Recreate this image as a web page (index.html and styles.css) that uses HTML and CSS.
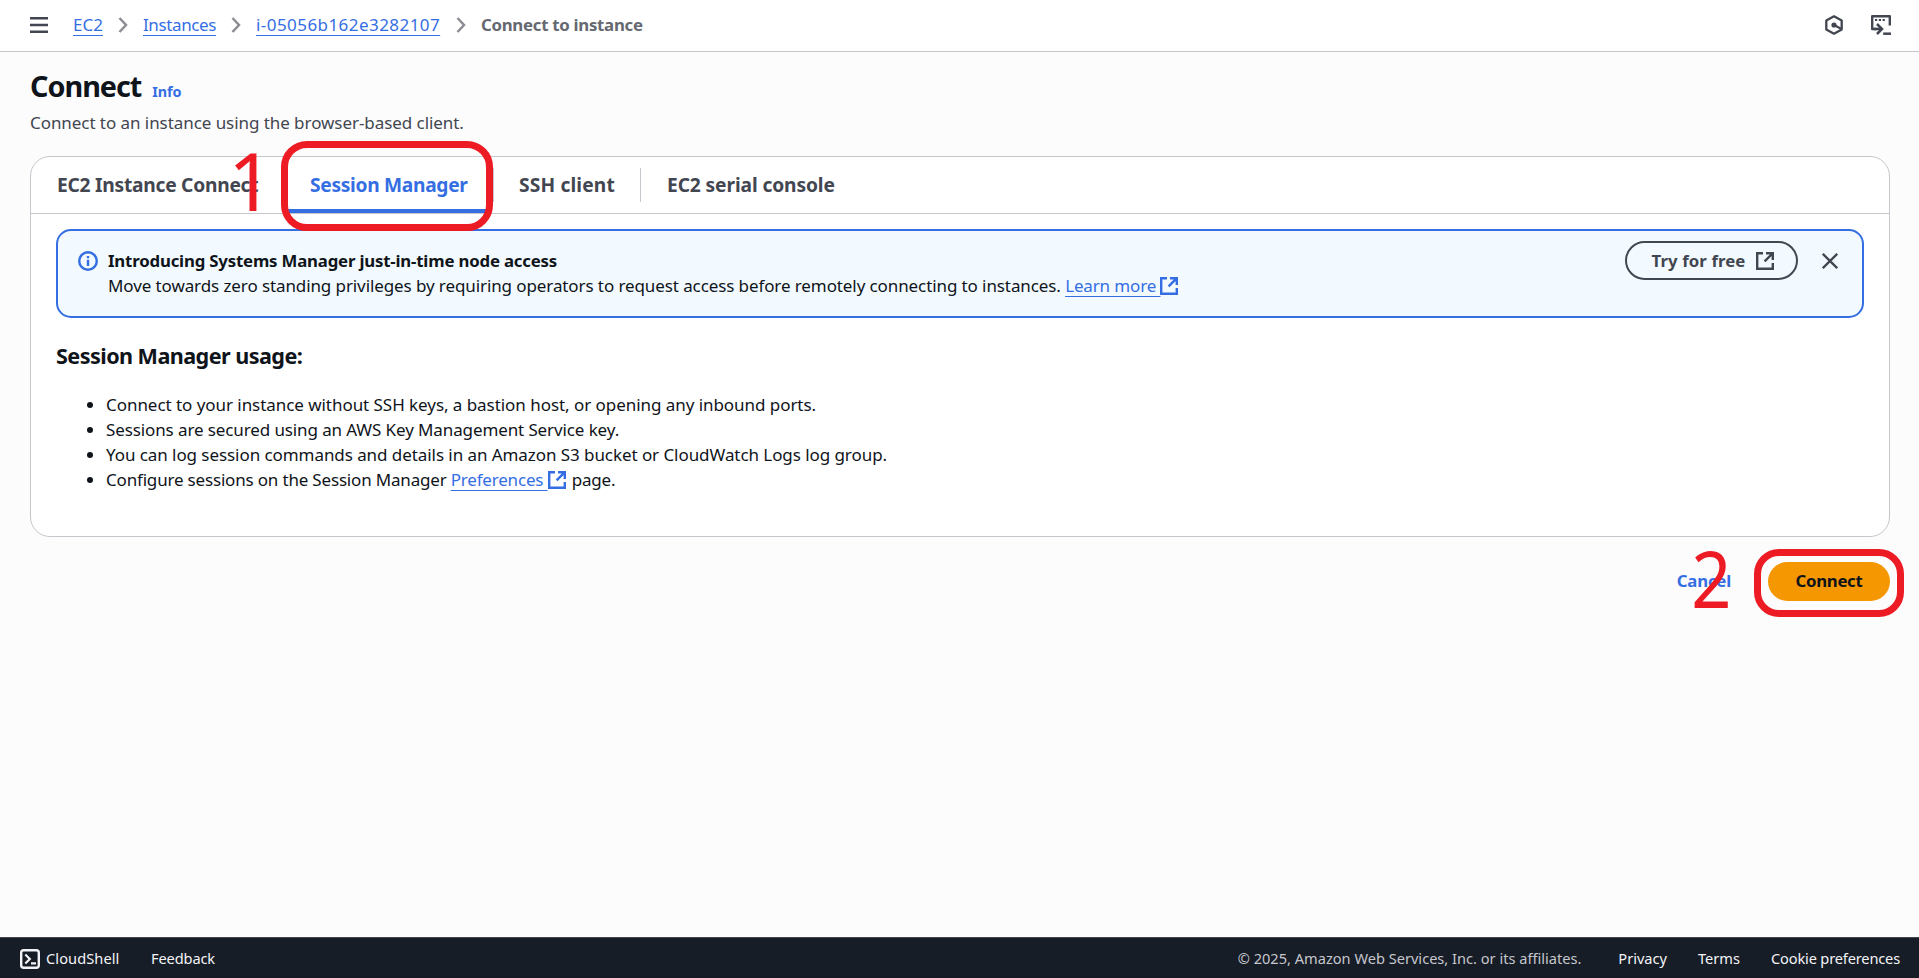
FILE: index.html
```html
<!DOCTYPE html>
<html lang="en">
<head>
<meta charset="utf-8">
<title>Connect to instance | EC2</title>
<link rel="stylesheet" href="styles.css">
</head>
<body>
<svg class="defs" width="0" height="0">
  <symbol id="external" viewBox="0 0 18 18">
    <path d="M7 1.2H1.2v15.6h15.6V11M10 1.2h6.8V8M16.8 1.2L8.6 9.4" fill="none" stroke="currentColor" stroke-width="2.4"/>
  </symbol>
  <symbol id="chevron" viewBox="0 0 10 16">
    <path d="M1.5 1l6.500 7-6.500 7" fill="none" stroke="currentColor" stroke-width="2.500"/>
  </symbol>
</svg>

<header class="topbar">
  <button class="icon-button menu" aria-label="Open menu">
    <svg width="18" height="16" viewBox="0 0 18 16"><path d="M0 1.250h18M0 8h18M0 14.750h18" stroke="currentColor" stroke-width="2.500"/></svg>
  </button>
  <nav class="crumbs">
    <a class="link crumb-ec2" href="#">EC2</a>
    <svg class="sep" width="10" height="16"><use href="#chevron"/></svg>
    <a class="link crumb-instances" href="#">Instances</a>
    <svg class="sep" width="10" height="16"><use href="#chevron"/></svg>
    <a class="link crumb-id" href="#">i-05056b162e3282107</a>
    <svg class="sep" width="10" height="16"><use href="#chevron"/></svg>
    <span class="crumb-current">Connect to instance</span>
  </nav>
  <div class="tools">
    <svg width="18" height="20" viewBox="0 0 18 20"><path d="M9 1.300l7.700 4.300v8.800L9 18.700l-7.700-4.300V5.600z" fill="none" stroke="currentColor" stroke-width="2.300" stroke-linejoin="round"/><circle cx="9" cy="10" r="2.600" fill="currentColor"/><path d="M9 10l7.500 4" stroke="currentColor" stroke-width="2.200"/></svg>
    <svg width="20" height="20" viewBox="0 0 20 20"><path d="M5.500 14H1.200V1.200h17.600v9.300" fill="none" stroke="currentColor" stroke-width="2.400" stroke-linejoin="round"/><path d="M4 5h2.200M7.800 5H10M11.600 5h2.200" stroke="currentColor" stroke-width="2.200"/><path d="M3 14h7.500M6 9l5 5-5 5" fill="none" stroke="currentColor" stroke-width="2.500"/><path d="M12.200 18.700H20" stroke="currentColor" stroke-width="2.500"/></svg>
  </div>
</header>

<main class="page">
  <div class="title-row"><h1>Connect</h1><a class="info" href="#">Info</a></div>
  <p class="description">Connect to an instance using the browser-based client.</p>

  <section class="card">
    <div class="tabs">
      <div class="tab tab-eic"><span>EC2 Instance Connect</span></div>
      <div class="tab tab-sm active"><span>Session Manager</span></div>
      <div class="tab tab-ssh"><span>SSH client</span></div>
      <div class="tab tab-serial"><span>EC2 serial console</span></div>
    </div>
    <div class="panel">
      <div class="alert">
        <svg class="alert-icon" width="20" height="20" viewBox="0 0 20 20"><circle cx="10" cy="10" r="8.800" fill="none" stroke="currentColor" stroke-width="2.400"/><path d="M10 5v2.300M10 8.700V15" stroke="currentColor" stroke-width="2.400"/></svg>
        <div class="alert-text">
          <strong>Introducing Systems Manager just-in-time node access</strong>
          <p>Move towards zero standing privileges by requiring operators to request access before remotely connecting to instances. <a class="link learn" href="#">Learn more&nbsp;</a><svg class="ext" width="18" height="18"><use href="#external"/></svg></p>
        </div>
        <button class="try">Try for free<svg width="18" height="18"><use href="#external"/></svg></button>
        <button class="icon-button close" aria-label="Dismiss"><svg width="16" height="16" viewBox="0 0 16 16"><path d="M.8.8l14.400 14.400M15.200.8L.8 15.200" stroke="currentColor" stroke-width="2.300"/></svg></button>
      </div>
      <h3>Session Manager usage:</h3>
      <ul class="usage">
        <li class="u1">Connect to your instance without SSH keys, a bastion host, or opening any inbound ports.</li>
        <li class="u2">Sessions are secured using an AWS Key Management Service key.</li>
        <li class="u3">You can log session commands and details in an Amazon S3 bucket or CloudWatch Logs log group.</li>
        <li class="u4">Configure sessions on the Session Manager <a class="link prefs" href="#">Preferences&nbsp;</a><svg class="ext" width="18" height="18"><use href="#external"/></svg> page.</li>
      </ul>
    </div>
  </section>

  <div class="actions">
    <button class="cancel">Cancel</button>
    <button class="connect">Connect</button>
  </div>
</main>

<footer class="footer">
  <svg width="20" height="20" viewBox="0 0 20 20"><rect x="1.200" y="1.200" width="17.600" height="17.600" rx="2.500" fill="none" stroke="currentColor" stroke-width="2.400"/><path d="M5.300 5.500l4.500 4.500-4.500 4.500M11 14.300h5" fill="none" stroke="currentColor" stroke-width="2.200"/></svg>
  <span class="cloudshell">CloudShell</span>
  <span class="feedback">Feedback</span>
  <span class="copyright">© 2025, Amazon Web Services, Inc. or its affiliates.</span>
  <span class="privacy">Privacy</span>
  <span class="terms">Terms</span>
  <span class="cookies">Cookie preferences</span>
</footer>

<div class="mark mark-tab"></div>
<div class="mark mark-connect"></div>
<div class="step step-one">1</div>
<div class="step step-two">2</div>
</body>
</html>
```
FILE: styles.css
```css
* { box-sizing: border-box; margin: 0; padding: 0; }

body {
  position: relative;
  display: flex;
  flex-direction: column;
  width: 100%;
  height: 978px;
  overflow: hidden;
  background: #fcfcfd;
  color: #0f141a;
  font: 17px/25px "Noto Sans", "Open Sans", sans-serif;
  white-space: nowrap;
}

svg { display: block; flex: none; }
.defs { position: absolute; }
button { font: inherit; color: inherit; background: none; border: 0; }
a { text-decoration: none; }
.link {
  color: #356ee3;
  text-decoration: underline;
  text-decoration-thickness: 1px;
  text-underline-offset: 4px;
}

/* Top bar */
.topbar {
  display: flex;
  align-items: center;
  height: 52px;
  padding: 0 28px 2px 30px;
  background: #fff;
  border-bottom: 1px solid #c6c6cd;
  color: #424650;
}
.menu { margin-right: 25px; }
.crumbs { display: flex; align-items: center; }
.sep { margin: 0 15px; color: #8c8c94; }
.crumb-ec2 { width: 30px; }
.crumb-instances { width: 73px; letter-spacing: -.39px; }
.crumb-id { width: 185px; letter-spacing: .44px; }
.crumb-current { font-size: 16.8px; font-weight: 700; letter-spacing: -.27px; color: #656871; }
.tools { display: flex; align-items: center; gap: 28px; margin-left: auto; }

/* Page heading */
.page { flex: 1; padding: 16px 29px 0 30px; }
.title-row { display: flex; align-items: baseline; height: 38px; gap: 11px; }
h1 { font-size: 28.8px; line-height: 36px; letter-spacing: -1.02px; }
.info { font-size: 14.4px; font-weight: 700; letter-spacing: -.15px; color: #356ee3; }
.description { margin-top: 4px; color: #424650; letter-spacing: -.06px; }

/* Tabbed card */
.card {
  height: 381px;
  margin-top: 21px;
  background: #fff;
  border: 1px solid #c6c6cd;
  border-radius: 20px;
}
.tabs { display: flex; height: 57px; padding-left: 1px; border-bottom: 1px solid #c6c6cd; }
.tab {
  position: relative;
  display: flex;
  align-items: center;
  padding: 0 0 1px 25px;
  font-size: 19.2px;
  font-weight: 700;
  color: #424650;
}
.tab:not(:last-child)::after {
  content: "";
  position: absolute;
  right: 0;
  top: 11px;
  width: 1px;
  height: 34px;
  background: #c6c6cd;
}
.tab-eic { width: 253px; letter-spacing: -.24px; }
.tab-sm { width: 209px; letter-spacing: -.31px; }
.tab-ssh { width: 147px; letter-spacing: .15px; }
.tab-serial { padding-left: 26px; letter-spacing: -.11px; }
.tab.active { color: #356ee3; }
.tab.active::before {
  content: "";
  position: absolute;
  left: 1px;
  right: 2px;
  bottom: 0;
  height: 4px;
  background: #356ee3;
}
.panel { padding: 15px 25px 0; }

/* Alert */
.alert {
  display: flex;
  align-items: flex-start;
  height: 89px;
  padding: 10px 24px 0 20px;
  background: #f2faff;
  border: 2px solid #356ee3;
  border-radius: 15px;
}
.alert-icon { margin: 10px 10px 0 0; color: #356ee3; }
.alert-text { flex: 1; padding-top: 7px; }
.alert-text strong { display: block; font-size: 16.8px; letter-spacing: -.18px; }
.alert-text p { letter-spacing: -.098px; }
.ext { display: inline-block; vertical-align: -3px; color: #356ee3; }
.learn { letter-spacing: -.14px; }
.try {
  display: flex;
  align-items: center;
  justify-content: center;
  gap: 11px;
  width: 173px;
  height: 39px;
  padding-left: 3px;
  border: 2px solid #424650;
  border-radius: 20px;
  color: #424650;
  font-size: 16.8px;
  font-weight: 700;
  letter-spacing: .09px;
}
.close { margin: 12px 0 0 24px; color: #424650; }

/* Usage list */
h3 { margin-top: 23px; font-size: 21.6px; line-height: 30px; letter-spacing: -.56px; }
.usage { margin-top: 21px; padding-left: 50px; }
.u1 { letter-spacing: -.05px; }
.u2 { letter-spacing: -.11px; }
.u3 { letter-spacing: -.066px; }
.u4 { letter-spacing: -.18px; }
.prefs { margin-right: 1px; letter-spacing: -.2px; }
.u4 .ext { margin-right: 1px; }

/* Actions */
.actions { display: flex; justify-content: flex-end; gap: 37px; margin-top: 25px; }
.actions button { height: 39px; padding-bottom: 2px; font-size: 16.8px; font-weight: 700; }
.cancel { color: #356ee3; letter-spacing: -.2px; }
.connect { width: 122px; border-radius: 20px; background: #f59700; letter-spacing: -.3px; }

/* Footer */
.footer {
  display: flex;
  align-items: center;
  height: 41px;
  padding: 0 19px 0 20px;
  background: #161d26;
  border-top: 1px solid #424650;
  color: #f3f3f7;
  font-size: 14.6px;
}
.footer svg { margin-top: 2px; }
.cloudshell { width: 104px; padding-left: 6px; letter-spacing: .08px; }
.feedback { margin-left: 7px; letter-spacing: -.12px; }
.copyright { margin-left: auto; color: #c6c6cd; }
.privacy { margin-left: 37px; }
.terms { margin-left: 31px; }
.cookies { margin-left: 31px; letter-spacing: -.16px; }

/* Walkthrough annotations */
.mark { position: absolute; border: 7px solid #ed1c24; }
.mark-tab { left: 281px; top: 141px; width: 212px; height: 90px; border-radius: 26px; }
.mark-connect { left: 1754px; top: 549px; width: 150px; height: 68px; border-radius: 25px; }
.step { position: absolute; color: #ed1c24; font-size: 80px; line-height: 80px; }
.step-one { left: 228px; top: 140px; }
.step-two { left: 1689px; top: 538px; font-size: 78px; transform: scaleX(.9); }
```
